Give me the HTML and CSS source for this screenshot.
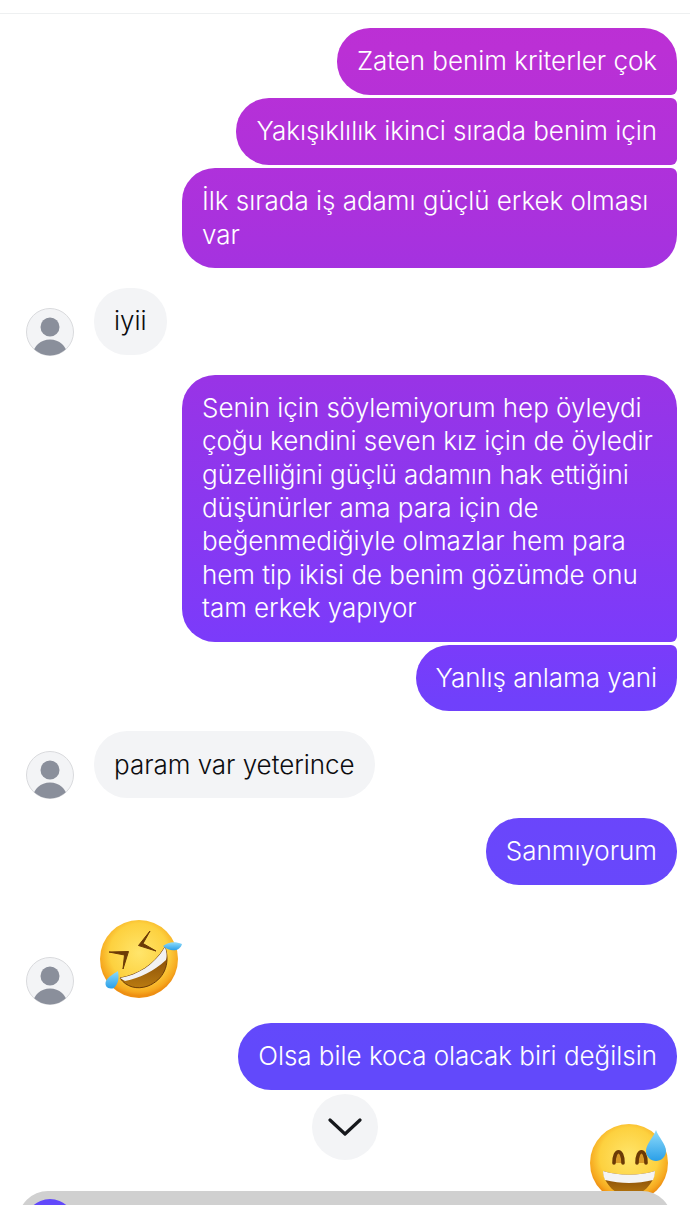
FILE: index.html
```html
<!DOCTYPE html>
<html lang="tr">
<head>
<meta charset="utf-8">
<title>Sohbet</title>
<link rel="stylesheet" href="styles.css">
</head>
<body>
<div class="screen">
  <div class="topbar"></div>
  <main class="thread">
    <section class="group out">
      <div class="bubble sent first">Zaten benim kriterler çok</div>
      <div class="bubble sent mid">Yakışıklılık ikinci sırada benim için</div>
      <div class="bubble sent last">İlk sırada iş adamı güçlü erkek olması var</div>
    </section>
    <section class="group in">
      <svg class="avatar" viewBox="0 0 48 48"><use href="#person"/></svg>
      <div class="bubble recv">iyii</div>
    </section>
    <section class="group out">
      <div class="bubble sent first">Senin için söylemiyorum hep öyleydi çoğu kendini seven kız için de öyledir güzelliğini güçlü adamın hak ettiğini düşünürler ama para için de beğenmediğiyle olmazlar hem para hem tip ikisi de benim gözümde onu tam erkek yapıyor</div>
      <div class="bubble sent last">Yanlış anlama yani</div>
    </section>
    <section class="group in">
      <svg class="avatar" viewBox="0 0 48 48"><use href="#person"/></svg>
      <div class="bubble recv">param var yeterince</div>
    </section>
    <section class="group out">
      <div class="bubble sent">Sanmıyorum</div>
    </section>
    <section class="group in emoji-row">
      <svg class="avatar" viewBox="0 0 48 48"><use href="#person"/></svg>
      <svg class="emoji-rofl" viewBox="10 8 84 86">
        <defs>
          <radialGradient id="face" cx="50%" cy="42%" r="55%">
            <stop offset="0" stop-color="#ffe56b"/>
            <stop offset=".68" stop-color="#fdd13f"/>
            <stop offset=".92" stop-color="#f6a81f"/>
            <stop offset="1" stop-color="#ee8f12"/>
          </radialGradient>
          <linearGradient id="drop" x1="0" y1="0" x2="0" y2="1">
            <stop offset="0" stop-color="#8fdcfb"/>
            <stop offset="1" stop-color="#2a9fe8"/>
          </linearGradient>
          <linearGradient id="mouth" x1="0" y1="0" x2="0" y2="1">
            <stop offset="0" stop-color="#7a4206"/>
            <stop offset="1" stop-color="#b97a10"/>
          </linearGradient>
        </defs>
        <circle cx="49" cy="49" r="39" fill="url(#face)"/>
        <path d="M60 21 48.5 35.5 66 41 53 33.5Z" fill="#6b3a06" stroke="#6b3a06" stroke-width="1" stroke-linejoin="round"/>
        <path d="M19 42 38.5 41.5 33 59 34.5 45Z" fill="#6b3a06" stroke="#6b3a06" stroke-width="1" stroke-linejoin="round"/>
        <path d="M30 68C48 65 64 55 75 37 81 55 73 70 58 76 47 80 36 77 30 68Z" fill="url(#mouth)" stroke="#6b3a06" stroke-width="1"/>
        <path d="M30 68C48 65 64 55 75 37 77 43 77 47 76 50 64 61 50 68 35 71Z" fill="#f2f2f2"/>
        <path d="M73 36C78 32 85 31 92 34 90 41 81 43 73 36Z" fill="url(#drop)"/>
        <path d="M28 61C29 67 29 73 24 78 18 80 14 76 16 71 18 67 23 64 28 61Z" fill="url(#drop)"/>
      </svg>
    </section>
    <section class="group out">
      <div class="bubble sent">Olsa bile koca olacak biri değilsin</div>
    </section>
    <section class="group out sticker-row">
      <svg class="emoji-sweat" viewBox="8 8 84 84">
        <circle cx="49" cy="47" r="39" fill="url(#face)"/>
        <path d="M34 47C34 32 43 32 43 47M57 47C57 32 66 32 66 47" fill="#d89a28" stroke="#6b3a06" stroke-width="3.6" stroke-linecap="round"/>
        <path d="M23 55C40 60 58 60 75 55 74 68 62 80 49 80 36 80 24 68 23 55Z" fill="url(#mouth)"/>
        <path d="M23 55C40 60 58 60 75 55 75 59 74 61 73 64 57 68 41 68 25 64 24 61 23 59 23 55Z" fill="#f4f4f4"/>
        <path d="M76 14C79 22 86 28 86 35 86 41 81 45 76 45 71 45 66 41 66 35 66 28 73 22 76 14Z" fill="url(#drop)"/>
      </svg>
    </section>
  </main>
  <button class="scroll-down" type="button" aria-label="Aşağı kaydır">
    <svg viewBox="0 0 34 20" class="chevron"><path d="M2 3 17 17 32 3" fill="none" stroke="#16181c" stroke-width="3.2" stroke-linecap="round" stroke-linejoin="round"/></svg>
  </button>
  <footer class="composer"><span class="composer-dot"></span></footer>
  <svg class="defs" width="0" height="0">
    <defs>
      <g id="person">
        <clipPath id="disc"><circle cx="24" cy="24" r="23.5"/></clipPath>
        <circle cx="24" cy="24" r="23.5" fill="#f3f4f6" stroke="#d9dadd" stroke-width="1"/>
        <g clip-path="url(#disc)" fill="#8a8f9b">
          <circle cx="24" cy="19" r="9.5"/>
          <ellipse cx="24" cy="47" rx="17" ry="15.5"/>
        </g>
      </g>
    </defs>
  </svg>
</div>
</body>
</html>
```
FILE: styles.css
```css
* { box-sizing: border-box; }
html, body { margin: 0; padding: 0; background: #fff; }
.screen {
  position: relative;
  width: 690px;
  height: 1205px;
  overflow: hidden;
  font-family: Inter, "Liberation Sans", sans-serif;
}
.topbar { height: 14px; border-bottom: 1px solid #eef0f1; }
.thread {
  display: flex;
  flex-direction: column;
  gap: 20px;
  padding: 14px 13px 0 26px;
}
.group { display: flex; }
.group.out { flex-direction: column; align-items: flex-end; gap: 3px; }
.group.in { align-items: flex-end; gap: 20px; }
.bubble {
  max-width: 495px;
  padding: 16.4px 20px 17.2px;
  font-size: 26px;
  font-weight: 350;
  letter-spacing: -0.03px;
  line-height: 33.33px;
  border-radius: 33px;
}
.sent {
  color: #fff;
  background: linear-gradient(180deg, #bc2fd4 0, #bb30d5 50px, #9d33e3 340px, #7b3bfa 640px, #7040fb 700px, #6947fb 850px, #6249fb 1050px) fixed;
}
.recv { color: #0c0c0f; background: #f3f4f6; padding-top: 16.35px; padding-bottom: 16.95px; }
.first { border-bottom-right-radius: 6px; }
.mid { border-top-right-radius: 6px; border-bottom-right-radius: 6px; }
.last { border-top-right-radius: 6px; }
.avatar { width: 48px; height: 48px; flex: none; margin-bottom: -1px; }
.group.emoji-row { margin-top: 13px; gap: 26px; margin-bottom: -1px; }
.emoji-rofl { width: 84px; height: 86px; flex: none; }
.sticker-row { margin-top: 14px; }
.emoji-sweat { width: 84px; height: 84px; margin-right: 5px; }
.scroll-down {
  position: absolute;
  left: 312px;
  top: 1094px;
  width: 66px;
  height: 66px;
  padding: 0;
  border: 0;
  border-radius: 50%;
  background: #f3f4f6;
  display: flex;
  align-items: center;
  justify-content: center;
}
.chevron { width: 34px; height: 20px; }
.composer {
  position: absolute;
  left: 18px;
  top: 1191px;
  width: 654px;
  height: 70px;
  background: #d0d0d0;
  border-radius: 30px;
}
.composer-dot {
  position: absolute;
  left: 7px;
  top: 8px;
  width: 50px;
  height: 50px;
  border-radius: 50%;
  background: #6249fb;
}
.defs { position: absolute; }
```
